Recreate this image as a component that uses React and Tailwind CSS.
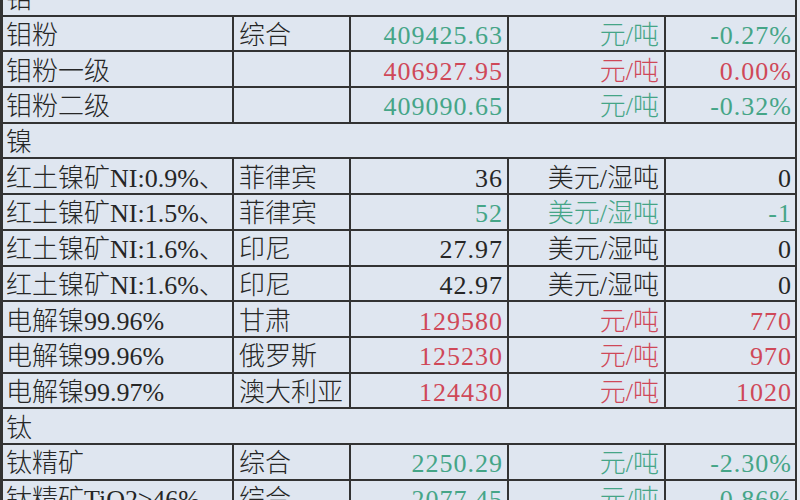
import React from "react";

const G = "text-[#45a587]";
const R = "text-[#cf4858]";
const K = "text-[#262626]";

const rows = [
  { h: "钼" },
  { c: ["钼粉", "综合", "409425.63", "元/吨", "-0.27%"], col: G },
  { c: ["钼粉一级", "", "406927.95", "元/吨", "0.00%"], col: R },
  { c: ["钼粉二级", "", "409090.65", "元/吨", "-0.32%"], col: G },
  { h: "镍" },
  { c: ["红土镍矿NI:0.9%、", "菲律宾", "36", "美元/湿吨", "0"], col: K },
  { c: ["红土镍矿NI:1.5%、", "菲律宾", "52", "美元/湿吨", "-1"], col: G },
  { c: ["红土镍矿NI:1.6%、", "印尼", "27.97", "美元/湿吨", "0"], col: K },
  { c: ["红土镍矿NI:1.6%、", "印尼", "42.97", "美元/湿吨", "0"], col: K },
  { c: ["电解镍99.96%", "甘肃", "129580", "元/吨", "770"], col: R },
  { c: ["电解镍99.96%", "俄罗斯", "125230", "元/吨", "970"], col: R },
  { c: ["电解镍99.97%", "澳大利亚", "124430", "元/吨", "1020"], col: R },
  { h: "钛" },
  { c: ["钛精矿", "综合", "2250.29", "元/吨", "-2.30%"], col: G },
  { c: ["钛精矿TiO2≥46%", "综合", "2077.45", "元/吨", "-0.86%"], col: G },
];

export default function App() {
  return (
    <div
      className="w-[800px] h-[500px] overflow-hidden bg-[#e6ebf2]"
      style={{ fontFamily: '"Liberation Serif", "Noto Sans CJK SC", serif' }}
    >
      <div className="w-[797px] -mt-[19px] border-l-[3px] border-r-2 border-[#333] bg-[#dfe6f0] text-[26px] leading-none font-light">
        {rows.map((r, i) =>
          r.h ? (
            <div key={i} className="h-[35.7px] border-b-2 border-[#333] flex items-center pl-[3px] pt-[5px] text-[#262626]">
              {r.h}
            </div>
          ) : (
            <div key={i} className="h-[35.7px] border-b-2 border-[#333] flex items-stretch">
              <div className="w-[231px] shrink-0 border-r-2 border-[#333] flex items-center pl-[3px] pt-[5px] text-[#262626] whitespace-nowrap overflow-hidden">
                {r.c[0]}
              </div>
              <div className="w-[117px] shrink-0 border-r-2 border-[#333] flex items-center pl-[5px] pt-[5px] text-[#262626] whitespace-nowrap overflow-hidden">
                {r.c[1]}
              </div>
              <div className={`w-[158px] shrink-0 border-r-2 border-[#333] flex items-center justify-end pr-[4px] pt-[5px] tracking-[1px] ${r.col}`}>
                {r.c[2]}
              </div>
              <div className={`w-[157px] shrink-0 border-r-2 border-[#333] flex items-center justify-end pr-[5px] pt-[5px] ${r.col}`}>
                {r.c[3]}
              </div>
              <div className={`flex-1 flex items-center justify-end pr-[3px] pt-[5px] tracking-[1px] ${r.col}`}>
                {r.c[4]}
              </div>
            </div>
          )
        )}
      </div>
    </div>
  );
}
